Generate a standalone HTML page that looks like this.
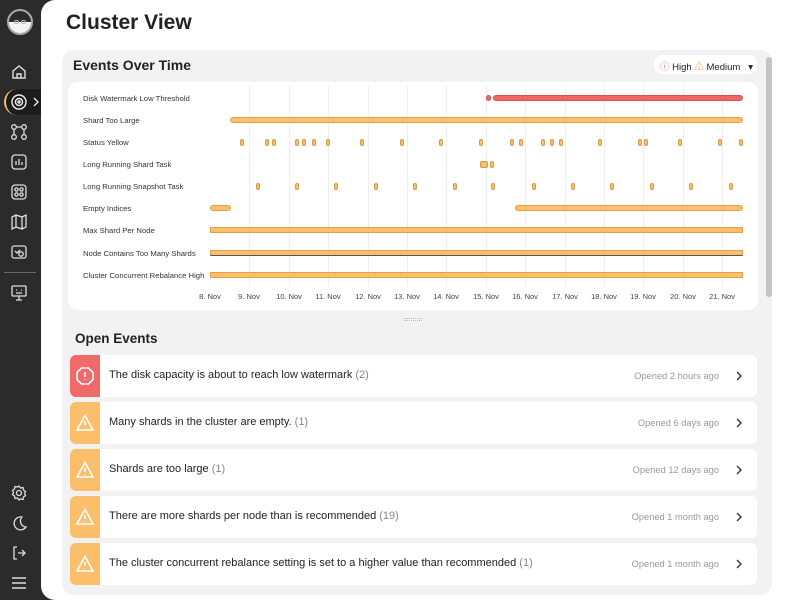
<!DOCTYPE html>
<html><head><meta charset="utf-8"><style>
*{box-sizing:border-box;margin:0;padding:0}
body{width:789px;height:600px;overflow:hidden;background:#2b2b2b;font-family:"Liberation Sans",sans-serif;position:relative;color:#222}
.main{position:absolute;left:41px;top:0;width:748px;height:600px;background:#fff;border-radius:14px 0 0 14px}
.abs{position:absolute}
.ic{position:absolute;left:10px;width:18px;height:18px}
.panel{position:absolute;left:62px;top:50px;width:710px;height:545px;background:#f2f2f2;border-radius:12px}
.card{position:absolute;left:68px;top:82px;width:690px;height:228px;background:#fff;border-radius:10px}
.lbl{position:absolute;left:83px;font-size:7.7px;color:#333}
.grid{position:absolute;top:86px;width:1px;height:200px;background:#eee}
.date{position:absolute;top:292px;font-size:7.5px;color:#444;transform:translateX(-50%)}
.bar{position:absolute;height:6px;border-radius:3px;background:#fbbf6b;border:1px solid #e3a24a}
.dot{position:absolute;width:4px;height:7px;border-radius:2px;background:#fbbf6b;border:1px solid #d79b45}
.row{position:absolute;left:70px;width:687px;height:42px;background:#fff;border-radius:6px;overflow:hidden}
.row .b{position:absolute;left:0;top:0;width:30px;height:42px;background:#fbbf6b}
.row .t{position:absolute;left:39px;top:14px;font-size:11px;color:#222}
.row .t span{color:#888}
.row .o{position:absolute;right:38px;top:16px;font-size:9.3px;color:#999}
.row .c{position:absolute;right:15px;top:16px}
</style></head><body>
<!-- sidebar -->
<div class="abs" style="left:7px;top:9px;width:26px;height:26px;border-radius:50%;background:linear-gradient(#2b2b2b 50%,#f4f4f4 50%);border:2px solid #aaa;overflow:hidden"><div class="abs" style="left:5px;top:9px;width:5px;height:4px;border:1.5px solid #bbb;border-radius:2px"></div><div class="abs" style="left:12px;top:9px;width:5px;height:4px;border:1.5px solid #bbb;border-radius:2px"></div></div>
<svg class="ic" style="top:63px" viewBox="0 0 18 18" fill="none" stroke="#ddd" stroke-width="1.4"><path d="M3 8l6-5 6 5v7H3z M7 15v-4h4v4"/></svg>
<div class="abs" style="left:4px;top:89px;width:48px;height:26px;border-radius:13px;background:#1c1c1c;border-left:2px solid #fbbf6b"></div>
<svg class="ic" style="top:93px;left:10px" viewBox="0 0 18 18" fill="none" stroke="#eee" stroke-width="1.4"><circle cx="9" cy="9" r="7"/><circle cx="9" cy="9" r="3.5"/><circle cx="9" cy="9" r="1"/></svg>
<svg class="abs" style="left:33px;top:97px" width="6" height="10" viewBox="0 0 6 10" fill="none" stroke="#eee" stroke-width="1.3"><path d="M1 1l4 4-4 4"/></svg>
<svg class="ic" style="top:123px" viewBox="0 0 18 18" fill="none" stroke="#ddd" stroke-width="1.3"><circle cx="4" cy="4" r="2.3"/><circle cx="14" cy="4" r="2.3"/><circle cx="4" cy="14" r="2.3"/><circle cx="14" cy="14" r="2.3"/><path d="M6.3 4h5.4M4 6.3v5.4M14 6.3v5.4"/></svg>
<svg class="ic" style="top:153px" viewBox="0 0 18 18" fill="none" stroke="#ddd" stroke-width="1.3"><rect x="2" y="2" width="14" height="14" rx="3"/><path d="M6 12V8M9 12V6M12 12V9"/></svg>
<svg class="ic" style="top:183px" viewBox="0 0 18 18" fill="none" stroke="#ddd" stroke-width="1.3"><rect x="2" y="2" width="14" height="14" rx="3"/><circle cx="6.5" cy="6.5" r="1.6"/><circle cx="11.5" cy="6.5" r="1.6"/><circle cx="6.5" cy="11.5" r="1.6"/><circle cx="11.5" cy="11.5" r="1.6"/></svg>
<svg class="ic" style="top:213px" viewBox="0 0 18 18" fill="none" stroke="#ddd" stroke-width="1.3"><path d="M2 4l4-2 6 2 4-2v12l-4 2-6-2-4 2z M6 2v12M12 4v12"/></svg>
<svg class="ic" style="top:243px" viewBox="0 0 18 18" fill="none" stroke="#ddd" stroke-width="1.3"><rect x="2" y="3" width="14" height="12" rx="2"/><circle cx="11" cy="11" r="2.2"/><path d="M5 8l2 2 3-3"/></svg>
<div class="abs" style="left:4px;top:272px;width:32px;height:1px;background:#666"></div>
<svg class="ic" style="top:284px" viewBox="0 0 18 18" fill="none" stroke="#ddd" stroke-width="1.3"><rect x="2" y="2" width="14" height="10" rx="1"/><path d="M9 12v4M6 16h6M6 6h1M11 6h1M6 9h6"/></svg>
<svg class="ic" style="top:484px" viewBox="0 0 18 18" fill="none" stroke="#ddd" stroke-width="1.3"><circle cx="9" cy="9" r="2.5"/><path d="M9 2l1.5 2 2.5-.5.5 2.5 2 1.5-1 2 1 2-2 1.5-.5 2.5-2.5-.5L9 16l-1.5-2-2.5.5-.5-2.5-2-1.5 1-2-1-2 2-1.5.5-2.5 2.5.5z"/></svg>
<svg class="ic" style="top:514px" viewBox="0 0 18 18" fill="none" stroke="#ddd" stroke-width="1.3"><path d="M12 3a6.5 6.5 0 1 0 4 10A6 6 0 0 1 12 3z"/></svg>
<svg class="ic" style="top:544px" viewBox="0 0 18 18" fill="none" stroke="#ddd" stroke-width="1.3"><path d="M7 3H4v12h3M8 9h7M12 6l3 3-3 3"/></svg>
<svg class="ic" style="top:574px" viewBox="0 0 18 18" fill="none" stroke="#ddd" stroke-width="1.6"><path d="M2 4h14M2 9h14M2 14h14"/></svg>

<div class="main"></div>
<div class="abs" style="left:66px;top:11px;font-size:21px;font-weight:bold;color:#222">Cluster View</div>
<div class="panel"></div>
<div class="abs" style="left:766px;top:57px;width:6px;height:240px;background:#c4c4c4;border-radius:3px"></div>
<div class="abs" style="left:73px;top:57px;font-size:14px;font-weight:bold;color:#222">Events Over Time</div>
<div class="abs" style="left:654px;top:55px;width:103px;height:19px;background:#fff;border-radius:8px;font-size:9.5px;padding:4px 0 0 6px;color:#222"><span style="color:#ef6666">ⓘ</span> High <span style="color:#f3b75c">⚠</span> Medium &nbsp;&nbsp;▾</div>
<div class="card"></div>
<div class="lbl" style="top:94px">Disk Watermark Low Threshold</div>
<div class="lbl" style="top:116px">Shard Too Large</div>
<div class="lbl" style="top:138px">Status Yellow</div>
<div class="lbl" style="top:160px">Long Running Shard Task</div>
<div class="lbl" style="top:182px">Long Running Snapshot Task</div>
<div class="lbl" style="top:204px">Empty Indices</div>
<div class="lbl" style="top:226px">Max Shard Per Node</div>
<div class="lbl" style="top:249px">Node Contains Too Many Shards</div>
<div class="lbl" style="top:271px">Cluster Concurrent Rebalance High</div>
<div class="grid" style="left:249px"></div><div class="grid" style="left:289px"></div><div class="grid" style="left:328px"></div><div class="grid" style="left:368px"></div><div class="grid" style="left:407px"></div><div class="grid" style="left:446px"></div><div class="grid" style="left:486px"></div><div class="grid" style="left:525px"></div><div class="grid" style="left:565px"></div><div class="grid" style="left:604px"></div><div class="grid" style="left:643px"></div><div class="grid" style="left:683px"></div><div class="grid" style="left:722px"></div>
<div class="date" style="left:210px">8. Nov</div><div class="date" style="left:249px">9. Nov</div><div class="date" style="left:289px">10. Nov</div><div class="date" style="left:328px">11. Nov</div><div class="date" style="left:368px">12. Nov</div><div class="date" style="left:407px">13. Nov</div><div class="date" style="left:446px">14. Nov</div><div class="date" style="left:486px">15. Nov</div><div class="date" style="left:525px">16. Nov</div><div class="date" style="left:565px">17. Nov</div><div class="date" style="left:604px">18. Nov</div><div class="date" style="left:643px">19. Nov</div><div class="date" style="left:683px">20. Nov</div><div class="date" style="left:722px">21. Nov</div>
<div class="bar" style="left:486px;top:95px;width:5px;background:#f06666;border-color:#e05050"></div>
<div class="bar" style="left:493px;top:95px;width:250px;background:#f06666;border-color:#e05050"></div>
<div class="bar" style="left:230px;top:117px;width:513px"></div>
<div class="bar" style="left:210px;top:205px;width:21px"></div>
<div class="bar" style="left:515px;top:205px;width:228px"></div>
<div class="bar" style="left:210px;top:227px;width:533px;border-radius:0"></div>
<div class="bar" style="left:210px;top:250px;width:533px;border-radius:0;border-bottom-color:#555"></div>
<div class="bar" style="left:210px;top:272px;width:533px;border-radius:0"></div>
<div class="dot" style="left:240px;top:139px"></div><div class="dot" style="left:265px;top:139px"></div><div class="dot" style="left:272px;top:139px"></div><div class="dot" style="left:295px;top:139px"></div><div class="dot" style="left:302px;top:139px"></div><div class="dot" style="left:312px;top:139px"></div><div class="dot" style="left:326px;top:139px"></div><div class="dot" style="left:360px;top:139px"></div><div class="dot" style="left:400px;top:139px"></div><div class="dot" style="left:439px;top:139px"></div><div class="dot" style="left:479px;top:139px"></div><div class="dot" style="left:510px;top:139px"></div><div class="dot" style="left:519px;top:139px"></div><div class="dot" style="left:541px;top:139px"></div><div class="dot" style="left:550px;top:139px"></div><div class="dot" style="left:559px;top:139px"></div><div class="dot" style="left:598px;top:139px"></div><div class="dot" style="left:638px;top:139px"></div><div class="dot" style="left:644px;top:139px"></div><div class="dot" style="left:678px;top:139px"></div><div class="dot" style="left:718px;top:139px"></div><div class="dot" style="left:739px;top:139px"></div>
<div class="dot" style="left:480px;top:161px;width:8px"></div><div class="dot" style="left:490px;top:161px"></div>
<div class="dot" style="left:256px;top:183px"></div><div class="dot" style="left:295px;top:183px"></div><div class="dot" style="left:334px;top:183px"></div><div class="dot" style="left:374px;top:183px"></div><div class="dot" style="left:413px;top:183px"></div><div class="dot" style="left:453px;top:183px"></div><div class="dot" style="left:491px;top:183px"></div><div class="dot" style="left:532px;top:183px"></div><div class="dot" style="left:571px;top:183px"></div><div class="dot" style="left:610px;top:183px"></div><div class="dot" style="left:650px;top:183px"></div><div class="dot" style="left:689px;top:183px"></div><div class="dot" style="left:729px;top:183px"></div>
<div class="abs" style="left:404px;top:318px;width:18px;height:3px;border-top:1px dotted #bbb;border-bottom:1px dotted #bbb"></div>
<div class="abs" style="left:75px;top:331px;font-size:13.5px;font-weight:bold;color:#222">Open Events</div>

<div class="row" style="top:355px"><div class="b" style="background:#f06a6a"><svg style="position:absolute;left:5px;top:11px" width="20" height="20" viewBox="0 0 20 20" fill="none" stroke="#fff" stroke-width="1.6"><path d="M6.5 2h7L18 6.5v7L13.5 18h-7L2 13.5v-7z"/><path d="M10 6v5M10 13.5v.5"/></svg></div><div class="t">The disk capacity is about to reach low watermark <span>(2)</span></div><div class="o">Opened 2 hours ago</div><svg class="c" width="6" height="10" viewBox="0 0 6 10" fill="none" stroke="#333" stroke-width="1.4"><path d="M1 1l4 4-4 4"/></svg></div>
<div class="row" style="top:402px"><div class="b"><svg style="position:absolute;left:5px;top:11px" width="20" height="20" viewBox="0 0 20 20" fill="none" stroke="#fff" stroke-width="1.6"><path d="M10 2.5L18 17H2z"/><path d="M10 8v4M10 14.5v.5"/></svg></div><div class="t">Many shards in the cluster are empty. <span>(1)</span></div><div class="o">Opened 6 days ago</div><svg class="c" width="6" height="10" viewBox="0 0 6 10" fill="none" stroke="#333" stroke-width="1.4"><path d="M1 1l4 4-4 4"/></svg></div>
<div class="row" style="top:449px"><div class="b"><svg style="position:absolute;left:5px;top:11px" width="20" height="20" viewBox="0 0 20 20" fill="none" stroke="#fff" stroke-width="1.6"><path d="M10 2.5L18 17H2z"/><path d="M10 8v4M10 14.5v.5"/></svg></div><div class="t">Shards are too large <span>(1)</span></div><div class="o">Opened 12 days ago</div><svg class="c" width="6" height="10" viewBox="0 0 6 10" fill="none" stroke="#333" stroke-width="1.4"><path d="M1 1l4 4-4 4"/></svg></div>
<div class="row" style="top:496px"><div class="b"><svg style="position:absolute;left:5px;top:11px" width="20" height="20" viewBox="0 0 20 20" fill="none" stroke="#fff" stroke-width="1.6"><path d="M10 2.5L18 17H2z"/><path d="M10 8v4M10 14.5v.5"/></svg></div><div class="t">There are more shards per node than is recommended <span>(19)</span></div><div class="o">Opened 1 month ago</div><svg class="c" width="6" height="10" viewBox="0 0 6 10" fill="none" stroke="#333" stroke-width="1.4"><path d="M1 1l4 4-4 4"/></svg></div>
<div class="row" style="top:543px"><div class="b"><svg style="position:absolute;left:5px;top:11px" width="20" height="20" viewBox="0 0 20 20" fill="none" stroke="#fff" stroke-width="1.6"><path d="M10 2.5L18 17H2z"/><path d="M10 8v4M10 14.5v.5"/></svg></div><div class="t">The cluster concurrent rebalance setting is set to a higher value than recommended <span>(1)</span></div><div class="o">Opened 1 month ago</div><svg class="c" width="6" height="10" viewBox="0 0 6 10" fill="none" stroke="#333" stroke-width="1.4"><path d="M1 1l4 4-4 4"/></svg></div>
</body></html>
